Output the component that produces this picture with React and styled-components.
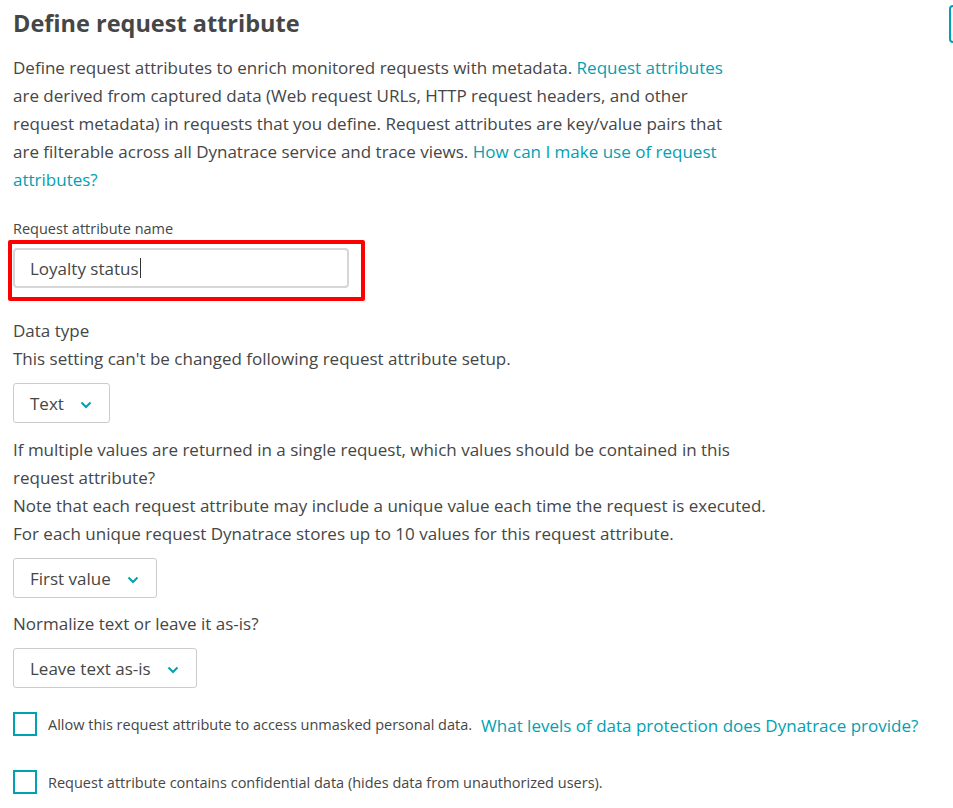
import React from 'react';
import styled, {createGlobalStyle} from 'styled-components';

const GlobalStyle = createGlobalStyle`
  body {
    margin: 0;
    background: #fff;
    color: #454646;
    font-family: "Open Sans", "Noto Sans", sans-serif;
    overflow-x: hidden;
  }
`

const Page = styled.div`
  padding: 0 0 0 13px;
`

const Header = styled.div`
  display: flex;
  justify-content: space-between;
  align-items: flex-start;
  height: 54px;
`

const Title = styled.h1`
  margin: 6px 0 0;
  font-size: 23.5px;
  font-weight: 700;
  line-height: 34px;
  color: #454646;
`

const EdgeButton = styled.button`
  margin: 5px -100px 0 0;
  width: 104px;
  height: 38px;
  border: 2px solid #00a1b2;
  border-radius: 4px;
  background: #fff;
`

const Text = styled.p`
  margin: ${p => p.$mt || 0}px 0 0;
  font-size: 17px;
  line-height: 28px;
  white-space: nowrap;
`

const Link = styled.a`
  color: #00a1b2;
  text-decoration: none;
`

const Label = styled.div`
  margin-top: 26px;
  font-size: 14.5px;
  line-height: 18px;
`

const NameRow = styled.div`
  display: flex;
  margin: 2px 0 0 -5px;
`

const Highlight = styled.div`
  padding: 4px 12px 9px 1px;
  border: 4px solid #ff0000;
  border-radius: 2px;
`

const Input = styled.div`
  box-sizing: border-box;
  width: 336px;
  height: 40px;
  display: flex;
  align-items: center;
  padding-left: 15px;
  border: 2px solid #d6d6d6;
  border-radius: 4px;
  font-size: 17px;
  color: #454646;
`

const Caret = styled.span`
  display: inline-block;
  width: 1px;
  height: 20px;
  background: #333;
  margin-left: 1px;
`

const Select = styled.div`
  box-sizing: border-box;
  display: inline-flex;
  align-items: center;
  gap: 16px;
  height: 40px;
  padding: 0 17px 0 16px;
  border: 1px solid #cccccc;
  border-radius: 3px;
  font-size: 17px;
  color: #454646;
`

const Field = styled.div`
  display: flex;
  margin-top: ${p => p.$mt || 0}px;
`

const CheckRow = styled.label`
  display: flex;
  align-items: center;
  gap: 11px;
  margin-top: ${p => p.$mt || 0}px;
  height: 24px;
  font-size: 14.5px;
`

const Box = styled.span`
  box-sizing: border-box;
  width: 24px;
  height: 24px;
  border: 2px solid #00a1b2;
  flex: none;
`

const CheckLink = styled(Link)`
  margin-left: -2px;
  font-size: 17px;
  padding-top: 3px;
`

const ChevronIcon = styled.svg`
  margin-top: 3px;
`

const Chevron = () => (
  <ChevronIcon width="12" height="8" viewBox="0 0 12 8">
    <path d="M1.5 1.5l4.5 4.5 4.5-4.5" fill="none" stroke="#00a1b2" strokeWidth="2"/>
  </ChevronIcon>
)

const App = () => {
  return (
    <Page>
      <GlobalStyle/>
      <Header>
        <Title>Define request attribute</Title>
        <EdgeButton/>
      </Header>
      <Text>
        Define request attributes to enrich monitored requests with metadata. <Link href="#">Request attributes</Link>
        <br/>
        are derived from captured data (Web request URLs, HTTP request headers, and other
        <br/>
        request metadata) in requests that you define. Request attributes are key/value pairs that
        <br/>
        are filterable across all Dynatrace service and trace views. <Link href="#">How can I make use of request</Link>
        <br/>
        <Link href="#">attributes?</Link>
      </Text>
      <Label>Request attribute name</Label>
      <NameRow>
        <Highlight>
          <Input>Loyalty status<Caret/></Input>
        </Highlight>
      </NameRow>
      <Text $mt={16}>Data type</Text>
      <Text>This setting can't be changed following request attribute setup.</Text>
      <Field $mt={10}>
        <Select>Text<Chevron/></Select>
      </Field>
      <Text $mt={13}>
        If multiple values are returned in a single request, which values should be contained in this
        <br/>
        request attribute?
        <br/>
        Note that each request attribute may include a unique value each time the request is executed.
        <br/>
        For each unique request Dynatrace stores up to 10 values for this request attribute.
      </Text>
      <Field $mt={10}>
        <Select>First value<Chevron/></Select>
      </Field>
      <Text $mt={12}>Normalize text or leave it as-is?</Text>
      <Field $mt={10}>
        <Select>Leave text as-is<Chevron/></Select>
      </Field>
      <CheckRow $mt={24}>
        <Box/>
        <span>Allow this request attribute to access unmasked personal data.</span>
        <CheckLink href="#">What levels of data protection does Dynatrace provide?</CheckLink>
      </CheckRow>
      <CheckRow $mt={34}>
        <Box/>
        <span>Request attribute contains confidential data (hides data from unauthorized users).</span>
      </CheckRow>
    </Page>
  );
};

export default App;
